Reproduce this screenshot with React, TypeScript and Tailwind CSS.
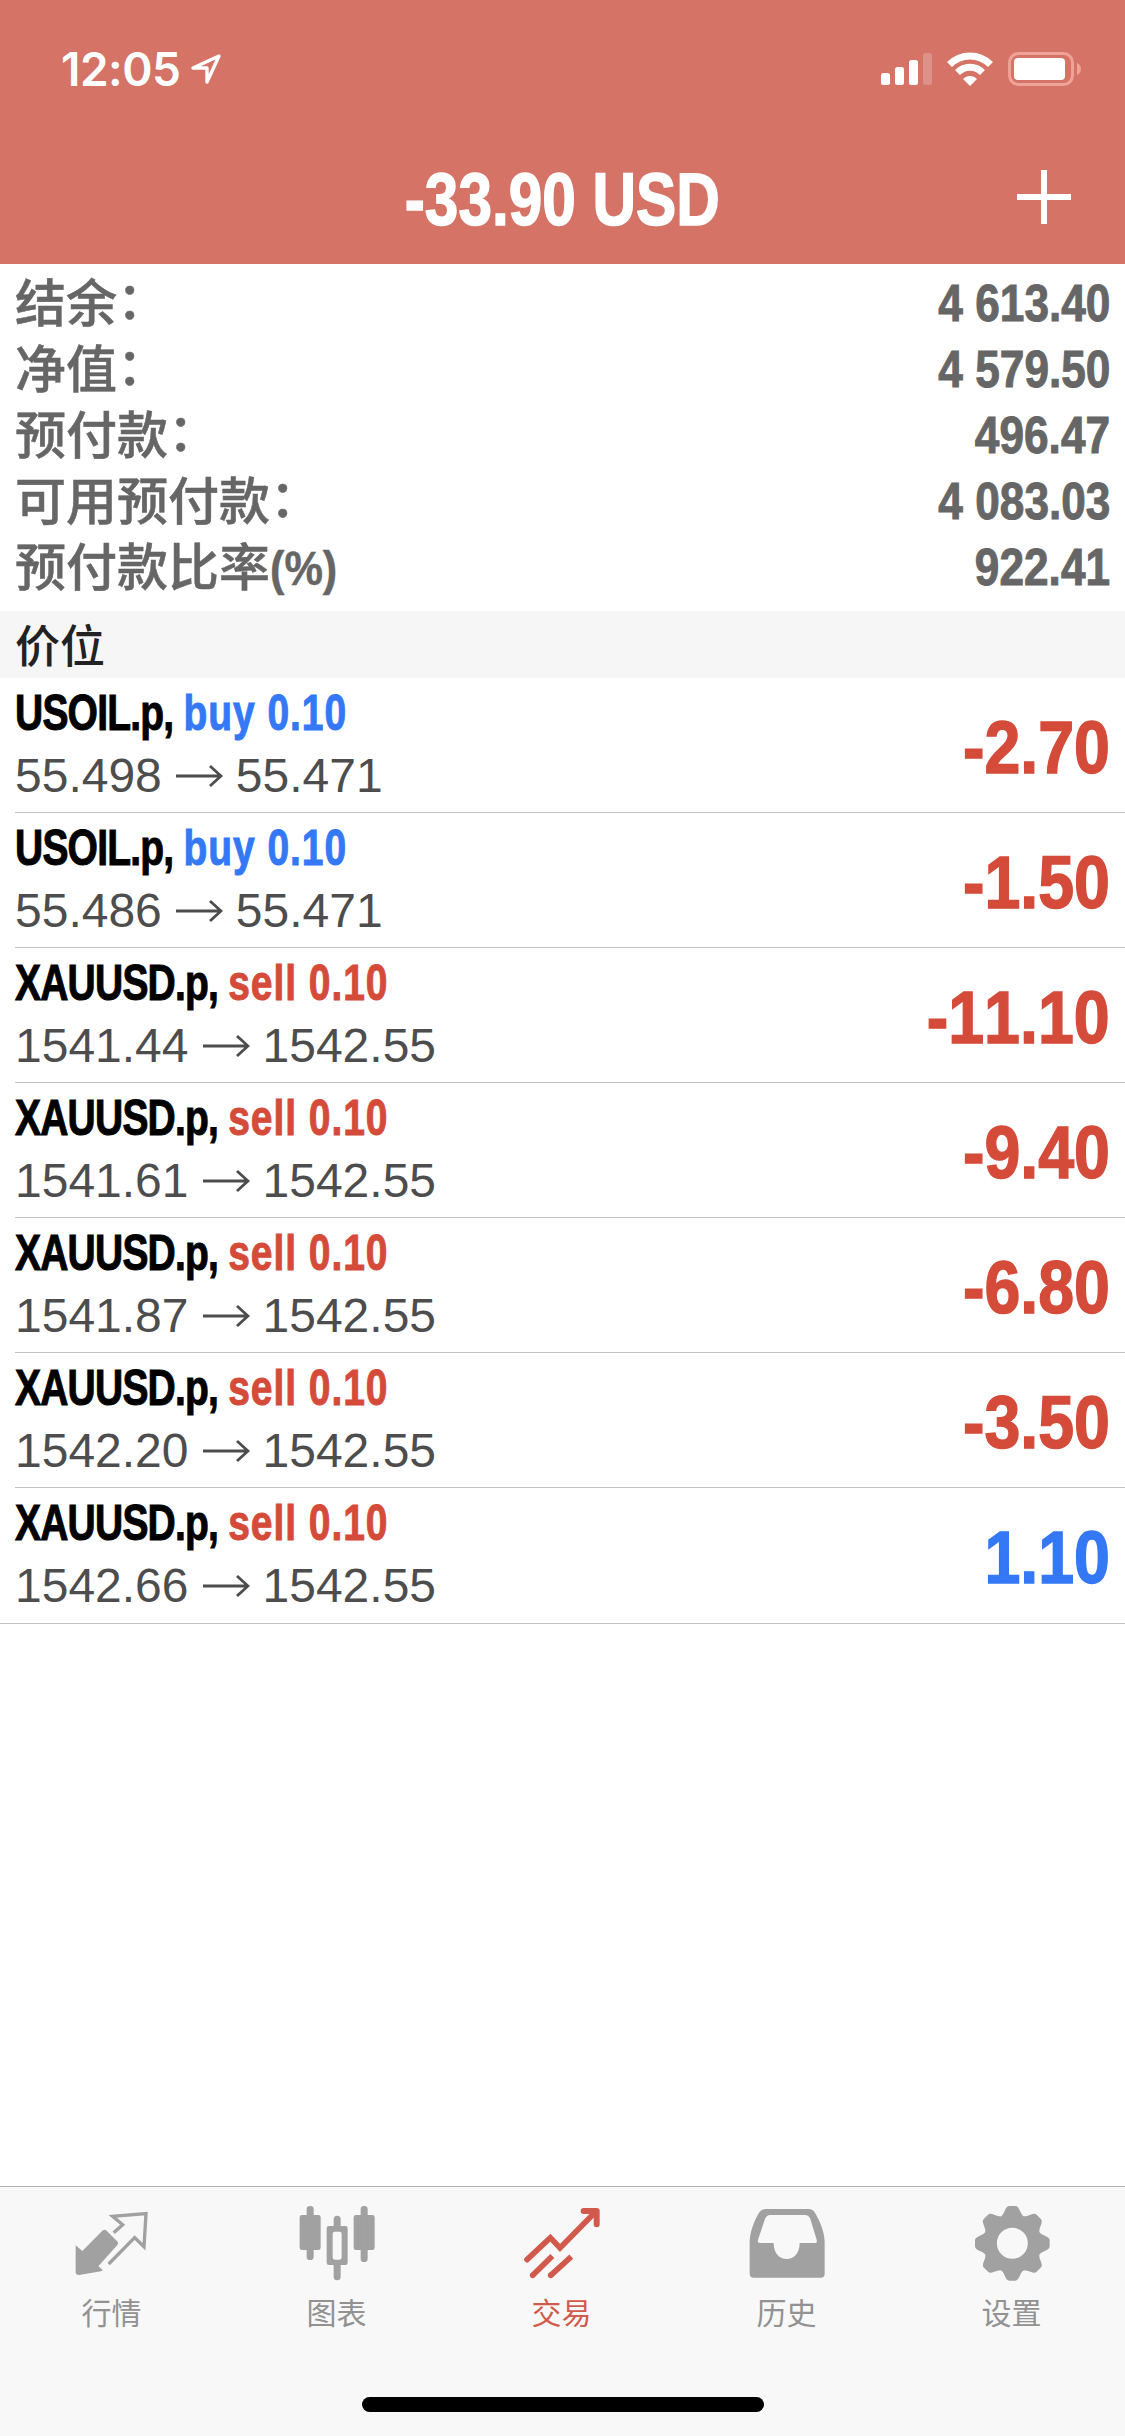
import type { ReactNode } from 'react';
import clsx from 'clsx';

interface Position { symbol: string; side: 'buy' | 'sell'; volume: string; open: string; current: string; profit: string; }

const SUMMARY = [
  { label: '结余', suffix: '：', value: '4 613.40' },
  { label: '净值', suffix: '：', value: '4 579.50' },
  { label: '预付款', suffix: '：', value: '496.47' },
  { label: '可用预付款', suffix: '：', value: '4 083.03' },
  { label: '预付款比率', suffix: '(%)', value: '922.41' },
];

const POSITIONS: Position[] = [
  { symbol: 'USOIL.p', side: 'buy', volume: '0.10', open: '55.498', current: '55.471', profit: '-2.70' },
  { symbol: 'USOIL.p', side: 'buy', volume: '0.10', open: '55.486', current: '55.471', profit: '-1.50' },
  { symbol: 'XAUUSD.p', side: 'sell', volume: '0.10', open: '1541.44', current: '1542.55', profit: '-11.10' },
  { symbol: 'XAUUSD.p', side: 'sell', volume: '0.10', open: '1541.61', current: '1542.55', profit: '-9.40' },
  { symbol: 'XAUUSD.p', side: 'sell', volume: '0.10', open: '1541.87', current: '1542.55', profit: '-6.80' },
  { symbol: 'XAUUSD.p', side: 'sell', volume: '0.10', open: '1542.20', current: '1542.55', profit: '-3.50' },
  { symbol: 'XAUUSD.p', side: 'sell', volume: '0.10', open: '1542.66', current: '1542.55', profit: '1.10' },
];

const CJK = "font-['Liberation_Sans','Noto_Sans_CJK_SC',sans-serif]";
// condensed bold: Liberation Sans squeezed with scale-x on each element
const BOLD = "font-['Liberation_Sans',sans-serif] font-bold [font-kerning:none] whitespace-pre";

/* ── Tab icons ── */

const QuotesIcon = () => (
  <>
    <path fill="currentColor" d="M5 121 25 138 85 77Q92 72 98 77L131 110Q134 116 130 120L73 184 85 194Q87 198 81 199L15 210Q5 210 5 202Z" />
    <path fill="none" stroke="currentColor" strokeWidth="10" d="M119 83 146 59 116 34 216 26 210 125 182 98 104 177" />
  </>
);

const ChartIcon = () => (
  <g fill="currentColor">
    <rect x="2" y="30" width="63" height="105" rx="7" />
    <rect x="23" y="3" width="21" height="162" rx="10" />
    <path fillRule="evenodd" d="M90 63H139Q146 63 146 70V173Q146 180 139 180H90Q83 180 83 173V70Q83 63 90 63ZM107 80Q101 80 101 87V157Q101 164 107 164H122Q128 164 128 157V87Q128 80 122 80Z" />
    <path d="M104 66V43a10.500 10.500 0 0 1 21 0V66ZM104 178V215a10.500 10.500 0 0 0 21 0V178Z" />
    <rect x="164" y="30" width="63" height="105" rx="7" />
    <rect x="185" y="3" width="21" height="168" rx="10" />
  </g>
);

const TradeIcon = () => (
  <g fill="none" stroke="currentColor" strokeWidth="17">
    <path strokeLinecap="round" d="M9 164 79 98 108 129 214 21" />
    <path strokeLinecap="round" strokeLinejoin="round" strokeWidth="18" d="M179 18H218V58" />
    <path d="M26 211 85 153M80 211 142 155" />
    <g fill="currentColor" stroke="none">
      <circle cx="26" cy="211" r="8.500" />
      <circle cx="80" cy="211" r="8.500" />
    </g>
  </g>
);

const HistoryIcon = () => (
  <path
    fill="currentColor"
    fillRule="evenodd"
    d="M2 110C3 80 15 48 31 22Q38 12 50 12H178Q190 12 197 22C215 52 226 82 227 110V206Q227 218 215 218H14Q2 218 2 206ZM27 104 48 42Q53 30 64 30H168Q179 30 184 42L203 104Q205 114 200 114H152C152 146 134 162 113 162 92 162 74 146 74 114H32Q24 113 27 104Z"
  />
);

const GearIcon = () => (
  <g transform="translate(115 115)">
    <circle r="67" fill="none" stroke="currentColor" strokeWidth="41" />
    {[0, 45, 90, 135, 180, 225, 270, 315].map(a => (
      <path key={a} transform={`rotate(${a})`} fill="currentColor" d="M-34-80Q-27-86-22-99-17-112-9-112H9Q17-112 22-99 27-86 34-80Z" />
    ))}
  </g>
);

const TABS: { label: string; icon: ReactNode; active?: boolean }[] = [
  { label: '行情', icon: <QuotesIcon /> },
  { label: '图表', icon: <ChartIcon /> },
  { label: '交易', icon: <TradeIcon />, active: true },
  { label: '历史', icon: <HistoryIcon /> },
  { label: '设置', icon: <GearIcon /> },
];

function StatusBar() {
  return (
    <div className="flex h-[132px] items-start justify-between pt-[52px] pr-[43px] pl-[61px]">
      <div className="flex items-start">
        <span className="font-['Inter',sans-serif] text-[46px] leading-[34px] font-semibold tracking-[-0.5px]">12:05</span>
        <svg className="ml-[9px] h-[34px] w-[32px]" viewBox="0 0 32 34" fill="none" stroke="currentColor" strokeWidth="3.4" strokeLinejoin="round">
          <path d="M29 4 3 16H17V30Z" />
        </svg>
      </div>
      <div className="flex items-start">
        <svg className="h-[34px] w-[52px]" viewBox="0 0 52 34" fill="currentColor">
          <rect x="0" y="21" width="9" height="12" rx="2.500" />
          <rect x="14" y="15" width="9" height="18" rx="2.500" />
          <rect x="28" y="8" width="9" height="25" rx="2.500" />
          <rect x="42" y="1" width="9" height="32" rx="2.500" opacity="0.22" />
        </svg>
        <svg className="ml-[14px] h-[34px] w-[46px]" viewBox="0 0 46 34" fill="none" stroke="currentColor" strokeWidth="7">
          <path d="M2.500 12.500C14 1 32 1 43.500 12.500" />
          <path d="M10.500 20.500C17.500 13.500 28.500 13.500 35.500 20.500" />
          <path fill="currentColor" stroke="none" d="M16 27C20 23 26 23 30 27L23 34Z" />
        </svg>
        <svg className="ml-[15px] h-[34px] w-[74px]" viewBox="0 0 74 34" fill="none">
          <rect x="1.500" y="1.500" width="63" height="31" rx="9" stroke="#efa297" strokeWidth="3" />
          <rect x="6" y="6" width="51" height="22" rx="4" fill="currentColor" />
          <path d="M69 11C74.300 13 74.300 21 69 23Z" fill="#efa297" />
        </svg>
      </div>
    </div>
  );
}

function PositionRow({ p, last }: { p: Position; last: boolean }) {
  return (
    <li className={last ? 'h-[136px] border-b border-[#c3c3c5]' : 'h-[135px] pl-[15px]'}>
      <div className={clsx('flex h-full justify-between pr-[15px]', last ? 'pl-[15px]' : 'border-b border-[#c3c3c5]')}>
        <div className="flex flex-col">
          <p className={clsx(BOLD, 'mt-[8px] h-[54px] origin-left scale-x-[0.78] text-[50px] leading-[54px] text-black [-webkit-text-stroke:1px]')}>
            <span className="tracking-[-1px]">{p.symbol}, </span>
            <span className={clsx('tracking-[1.200px]', p.side === 'buy' ? 'text-[#3478f6]' : 'text-[#d54b3a]')}>{p.side} {p.volume}</span>
          </p>
          <p className="mt-[9px] flex h-[54px] items-center gap-[13px] font-['Liberation_Sans',sans-serif] text-[48px] leading-[54px] text-[#4d4d4d] [font-kerning:none]">
            {p.open}
            <svg className="h-[24px] w-[48px]" viewBox="0 0 48 24" fill="none" stroke="currentColor" strokeWidth="2.800">
              <path d="M1 12H45M35 2 46 12 35 22" />
            </svg>
            {p.current}
          </p>
        </div>
        <p className={clsx(BOLD, 'mt-[29px] h-[80px] origin-right scale-x-[0.86] text-[75px] leading-[80px] [-webkit-text-stroke:1.500px]', p.profit.startsWith('-') ? 'text-[#d54b3a]' : 'text-[#3478f6]')}>
          {p.profit}
        </p>
      </div>
    </li>
  );
}

export default function App() {
  return (
    <main className="flex h-[2436px] w-full flex-col bg-white">

      {/* Header */}
      <header className="h-[264px] shrink-0 bg-[#d57367] text-white">
        <StatusBar />
        <div className="grid h-[132px] grid-cols-[1fr_auto_1fr] items-center">
          <span />
          <h1 className={clsx(BOLD, 'mt-[3px] scale-x-[0.815] text-[74px] leading-[80px] [-webkit-text-stroke:1.500px]')}>-33.90 USD</h1>
          <svg className="mr-[53px] h-[56px] w-[56px] justify-self-end" viewBox="0 0 56 56" stroke="currentColor" strokeWidth="6">
            <path d="M1 27H55M28 0V54" />
          </svg>
        </div>
      </header>

      {/* Account summary */}
      <dl className="h-[347px] shrink-0 px-[15px] pt-[6px] text-[#666]">
        {SUMMARY.map(s => (
          <div key={s.label} className="flex h-[66px] items-center justify-between">
            <dt className={clsx(CJK, 'flex pt-[4px] text-[51px] leading-[62px] font-medium [-webkit-text-stroke:0.5px]')}>
              {s.label}
              {s.suffix === '：'
                ? <span className="-mt-[3px]">{s.suffix}</span>
                : <span className="origin-left scale-x-[0.9] text-[48px] font-bold">{s.suffix}</span>}
            </dt>
            <dd className={clsx(BOLD, 'origin-right scale-x-[0.85] text-[52px] leading-[66px] [-webkit-text-stroke:1px]')}>{s.value}</dd>
          </div>
        ))}
      </dl>

      {/* Positions */}
      <h2 className={clsx(CJK, 'h-[67px] shrink-0 bg-[#f6f6f6] pt-[4px] pl-[15px] text-[45px] leading-[65px] font-medium text-[#222]')}>价位</h2>
      <ul className="flex-1">
        {POSITIONS.map((p, i) => (
          <PositionRow key={i} p={p} last={i === POSITIONS.length - 1} />
        ))}
      </ul>

      {/* Tab bar */}
      <nav className="flex h-[250px] shrink-0 flex-col items-center border-t border-[#b2b2b2] bg-[#f8f8f8]">
        <div className="grid h-[210px] w-full grid-cols-5">
          {TABS.map(t => (
            <button key={t.label} className={clsx('flex flex-col items-center pt-[18px]', t.active ? 'text-[#d25a4d]' : 'text-[#929292]')}>
              <svg className={clsx('h-[78px] w-[78px]', !t.active && 'text-[#a1a1a1]')} viewBox="0 0 234 234">{t.icon}</svg>
              <span className={clsx(CJK, 'mt-[11px] mr-[2px] text-[30px] leading-[40px]')}>{t.label}</span>
            </button>
          ))}
        </div>
        <div className="h-[15px] w-[402px] rounded-full bg-black" />
      </nav>
    </main>
  );
}
